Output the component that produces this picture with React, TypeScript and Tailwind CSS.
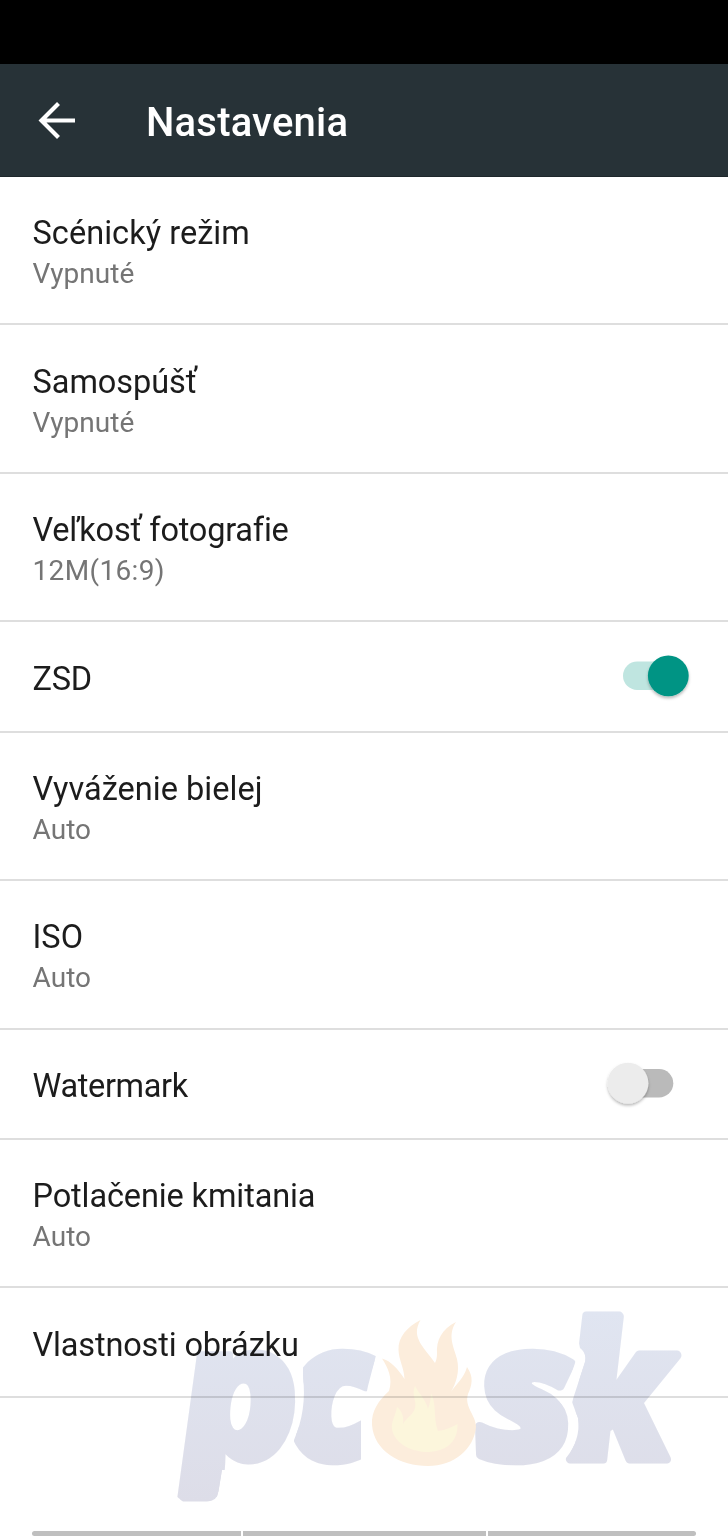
import React from "react";

type Setting = {
  title: string;
  value?: string;
  checked?: boolean;
  tracking?: string;
};

const settings: Setting[] = [
  { title: "Scénický režim", value: "Vypnuté", tracking: "tracking-[0.04px]" },
  { title: "Samospúšť", value: "Vypnuté", tracking: "tracking-[-0.05px]" },
  { title: "Veľkosť fotografie", value: "12M(16:9)", tracking: "tracking-[-0.22px]" },
  { title: "ZSD", checked: true, tracking: "tracking-[-0.3px]" },
  { title: "Vyváženie bielej", value: "Auto", tracking: "tracking-[0.02px]" },
  { title: "ISO", value: "Auto", tracking: "tracking-normal" },
  { title: "Watermark", checked: false, tracking: "tracking-[-0.35px]" },
  { title: "Potlačenie kmitania", value: "Auto", tracking: "tracking-[-0.12px]" },
  { title: "Vlastnosti obrázku", tracking: "tracking-[-0.15px]" },
];

function Toggle({ checked }: { checked: boolean }) {
  return (
    <svg width="96" height="60" viewBox="0 0 96 60" role="switch" aria-checked={checked} className="shrink-0">
      <defs>
        <filter id="thumb-shadow" x="-30%" y="-30%" width="160%" height="160%">
          <feDropShadow dx="0" dy="2" stdDeviation="1.4" floodColor="#000" floodOpacity="0.28" />
        </filter>
      </defs>
      {checked ? (
        <>
          <rect x="23" y="15.5" width="50" height="28.5" rx="14.2" fill="#bfe5e0" />
          <circle cx="68.3" cy="29.8" r="20.4" fill="#009484" filter="url(#thumb-shadow)" />
        </>
      ) : (
        <>
          <rect x="23" y="15" width="50.3" height="28.5" rx="14.2" fill="#bababa" />
          <circle cx="28" cy="29.2" r="20.4" fill="#ececec" filter="url(#thumb-shadow)" />
        </>
      )}
    </svg>
  );
}

function SettingRow({ item }: { item: Setting }) {
  return (
    <li
      className={`flex items-center justify-between border-b-2 border-[#dedede] pl-[32.5px] ${
        item.value ? "h-[148.5px]" : "h-[110.15px]"
      }`}
    >
      <div className={`flex flex-col ${item.value ? "pt-[4px]" : "pt-[4.6px]"}`}>
        <span className={`text-[32.5px] leading-[44px] text-[#1c1c1c] ${item.tracking ?? ""}`}>{item.title}</span>
        {item.value && (
          <span
            className={`text-[28px] leading-[38px] text-[#757575] ${
              item.value.startsWith("12M") ? "tracking-[0.35px]" : "tracking-[0.05px]"
            }`}
          >
            {item.value}
          </span>
        )}
      </div>
      {item.checked !== undefined && (
        <div className="mr-8">
          <Toggle checked={item.checked} />
        </div>
      )}
    </li>
  );
}

function Watermark() {
  return (
    <svg
      className="pointer-events-none absolute left-[160px] top-[1290px] mix-blend-multiply"
      width="540"
      height="230"
      viewBox="160 1290 540 230"
    >
      <defs>
        <linearGradient id="ink" gradientUnits="userSpaceOnUse" x1="0" y1="-148" x2="0" y2="42">
          <stop offset="0" stopColor="#e0e5f1" />
          <stop offset="1" stopColor="#dddde8" />
        </linearGradient>
        <clipPath id="clip-p">
          <path d="M190 1345H296V1470H222L218.500 1491Q217 1501.500 207 1501.500H183L176 1496Z" />
        </clipPath>
        <clipPath id="clip-c">
          <path d="M303 1340H380L368 1386L361 1420V1475H294V1440Q307 1410 303 1376Z" />
        </clipPath>
        <clipPath id="clip-s">
          <path d="M470 1340H578L576 1360L567 1388L560 1402Q575 1418 570 1434Q562 1470 520 1475H470Z" />
        </clipPath>
        <clipPath id="clip-k">
          <path d="M570 1300H690V1475H558L566 1458Q581 1440 578 1418L572 1402L585 1362Q587 1353 580 1348Z" />
        </clipPath>
      </defs>
      <g
        fontFamily="'Noto Sans', 'Open Sans', sans-serif"
        fontWeight="900"
        fontStyle="italic"
        fontSize="188"
        fill="url(#ink)"
        stroke="url(#ink)"
        strokeWidth="9"
        strokeLinejoin="round"
      >
        <g clipPath="url(#clip-p)">
          <text transform="translate(183 1460) skewX(5) scale(1.060 1)" fontSize="192" strokeWidth="5">p</text>
        </g>
        <g clipPath="url(#clip-c)">
          <text transform="translate(288 1459) skewX(3) scale(.95 1)">c</text>
        </g>
        <g clipPath="url(#clip-s)">
          <text transform="translate(478 1459) skewX(2) scale(1.060 1)">s</text>
        </g>
        <g clipPath="url(#clip-k)">
          <text transform="translate(568 1459) skewX(4.500) scale(.93 1)">k</text>
        </g>
      </g>
      <path
        d="M420.500 1320C407 1327 398 1337 398.500 1350C399 1361 404 1367 404.500 1379C398 1369 391 1361 382 1358.500C388 1368 393 1378 389 1391C379 1400 371 1411 372 1425C374 1451 400 1466 428 1466C454 1466 474 1449 476 1427C476 1415 464 1407 468 1394C472 1385 474 1377 467 1367C464 1378 456 1384 451 1392C456 1383 460 1372 457 1359C454 1347 447 1336 456 1322C442 1329 436 1340 437 1354C437 1358 436 1361 435 1363C425 1348 410 1338 420.500 1320Z"
        fill="#fceddc"
      />
      <path
        d="M415 1386C420 1395 426 1400 428 1409C430 1403 431 1398 431 1393C437 1405 433 1418 438 1431C446 1430 452 1427 457.500 1424C458 1443 445 1452 426 1452C405 1451 390 1438 392 1424C394 1416 396 1413 397 1407C402 1411 404 1417 403 1424C407 1417 413 1415 415 1408C417 1400 411 1395 415 1386Z"
        fill="#fcf6dc"
      />
    </svg>
  );
}

export default function App() {
  return (
    <div className="relative flex h-[1536px] w-[728px] flex-col overflow-hidden bg-white font-[Roboto,sans-serif]">
      <div className="h-16 shrink-0 bg-black" />
      <header className="flex h-[112.9px] shrink-0 items-center border-b border-[#1e272b] bg-[#273237] pl-[38px]">
        <svg width="38" height="38" viewBox="0 0 38 38" fill="none" stroke="white" strokeWidth="4.2">
          <path d="M20.500 2.500L3.500 19.500L20.500 36.500M3.500 19.500H37" />
        </svg>
        <h1 className="ml-[70px] pt-1.5 text-[40px] font-medium tracking-[0.2px] text-white">Nastavenia</h1>
      </header>
      <ul className="flex flex-col">
        {settings.map((item) => (
          <SettingRow key={item.title} item={item} />
        ))}
      </ul>
      <div className="mt-auto flex h-[5px] gap-[2px] px-8">
        <div className="w-[209px] rounded-l-full bg-[#bfbfbf]" />
        <div className="w-[243px] bg-[#bfbfbf]" />
        <div className="w-[208px] rounded-r-full bg-[#bfbfbf]" />
      </div>
      <Watermark />
    </div>
  );
}
